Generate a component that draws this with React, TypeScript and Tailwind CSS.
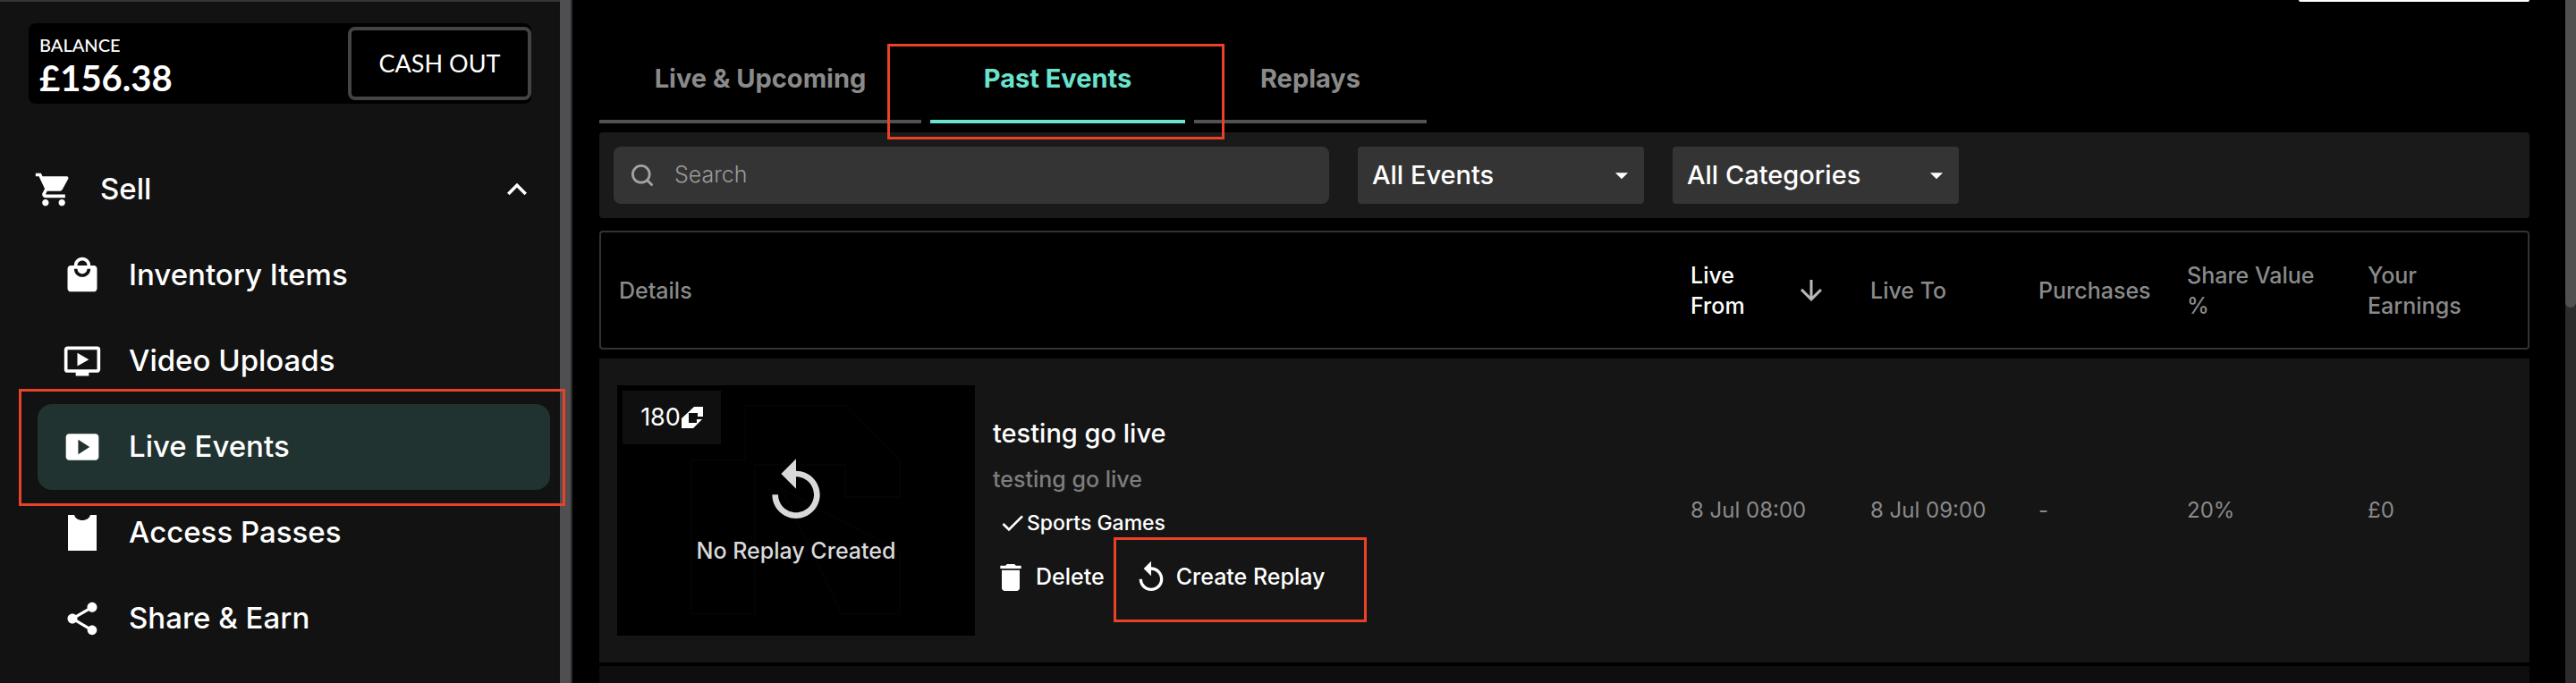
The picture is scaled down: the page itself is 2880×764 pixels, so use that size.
import React, { useState } from 'react';
import {
  MdArrowDownward,
  MdArrowDropDown,
  MdCheck,
  MdDelete,
  MdExpandLess,
  MdLocalMall,
  MdOndemandVideo,
  MdReplay,
  MdShare,
  MdShoppingCart,
  MdSmartDisplay,
} from 'react-icons/md';

const PassIcon = () => (
  <svg viewBox="0 0 44 44" className="size-11" fill="currentColor" aria-hidden="true">
    <path d="M6 2h7c1 3.8 4.500 6 9 6s8-2.200 9-6h7v40H6z" />
  </svg>
);

const SearchIcon = () => (
  <svg viewBox="0 0 24 24" className="size-6" fill="none" stroke="#a3a3a3" strokeWidth="2.8" aria-hidden="true">
    <circle cx="10.800" cy="10.800" r="9.400" />
    <path d="M17.500 17.500l6 6" />
  </svg>
);

const TokenIcon = () => (
  <svg viewBox="0 0 24 24" className="size-6" fill="currentColor" aria-hidden="true">
    <path d="M14 0h10v11h-6V7H8v11h9v-4h6L13 24H0V13z" />
  </svg>
);

const Watermark = () => (
  <svg viewBox="0 0 400 280" className="absolute inset-0 size-full" fill="none" stroke="#040404" strokeWidth="2" aria-hidden="true">
    <path d="M83 84h60V23h114l59 61v41h-61V89H154v167H83z" />
    <path d="M184 116l132 70v70h-65z" />
  </svg>
);

// red frame drawn over a highlighted control
const Frame = ({ className }: { className: string }) => (
  <span className={`absolute z-10 border-3 border-[#ea4226] pointer-events-none ${className}`} />
);

const navItems = [
  { label: 'Inventory Items', icon: <MdLocalMall className="size-11" /> },
  { label: 'Video Uploads', icon: <MdOndemandVideo className="size-11" /> },
  { label: 'Live Events', icon: <MdSmartDisplay className="size-11" /> },
  { label: 'Access Passes', icon: <PassIcon /> },
  { label: 'Share & Earn', icon: <MdShare className="size-11" /> },
];

const Sidebar: React.FC = () => (
  <aside className="flex w-[640px] shrink-0">
    <div className="flex-1 bg-[#121212] border-t-2 border-[#363630] text-white">
      <div className="mt-6 ml-8 mr-8 flex items-center justify-between rounded-lg bg-black">
        <div className="pl-3 pt-3 pb-1">
          <p className="font-['Lato'] text-xl leading-6 font-medium">BALANCE</p>
          <p className="font-['Lato'] text-[40px] leading-[50px] font-bold">£156.38</p>
        </div>
        <button className="h-[82px] w-[205px] rounded-lg border-4 border-[#444] font-['Lato'] text-[27px]">
          CASH OUT
        </button>
      </div>
      <nav className="mt-12">
        <button className="flex h-24 w-full items-center pl-[38px] pr-[26px] text-[33px] font-medium">
          <MdShoppingCart className="size-11" />
          <span className="ml-[30px] flex-1 text-left">Sell</span>
          <MdExpandLess className="size-11" />
        </button>
        {navItems.map(item => {
          const active = item.label === 'Live Events';
          return (
            <a
              key={item.label}
              href="#"
              className={`relative ml-[42px] mr-[11px] flex h-24 items-center gap-[30px] rounded-2xl pl-7 text-[33px] font-medium ${active ? 'bg-[#203330]' : ''}`}
            >
              {item.icon}
              {item.label}
              {active && <Frame className="-left-[21px] -right-[17px] -top-[17px] -bottom-[18px]" />}
            </a>
          );
        })}
      </nav>
    </div>
    <div className="w-[14px] border-r-2 border-[#2e2e2e] bg-[#4f4f51]" />
  </aside>
);

const tabs = [
  { label: 'Live & Upcoming', width: 'w-[360px]' },
  { label: 'Past Events', width: 'w-[285px]' },
  { label: 'Replays', width: 'w-[260px]' },
];

const Select = ({ label, options }: { label: string; options: string[] }) => (
  <div className="relative w-80">
    <select
      aria-label={label}
      className="h-16 w-full appearance-none rounded bg-[#343434] pl-4 pr-12 text-[29px] font-medium text-white"
    >
      {options.map(option => (
        <option key={option}>{option}</option>
      ))}
    </select>
    <MdArrowDropDown className="absolute right-2 top-[15px] size-[34px] text-white pointer-events-none" />
  </div>
);

const EventsTable: React.FC = () => (
  <table className="mt-[10px] w-full table-fixed border-separate border-spacing-x-0 border-spacing-y-1 text-2xl text-[#8a8a8a]">
    <colgroup>
      <col />
      <col className="w-[201px]" />
      <col className="w-[188px]" />
      <col className="w-[166px]" />
      <col className="w-[202px]" />
      <col className="w-[201px]" />
    </colgroup>
    <thead>
      <tr className="h-[133px] text-left text-[25px] leading-[34px] *:border-y-2 *:border-[#333] *:font-medium *:pl-5">
        <th className="rounded-l border-l-2">Details</th>
        <th className="pr-7">
          <button className="flex w-full items-center justify-between text-left text-white">
            <span className="w-20">Live From</span>
            <MdArrowDownward className="size-9 text-[#b8b8b8]" />
          </button>
        </th>
        <th>Live To</th>
        <th>Purchases</th>
        <th className="pr-8">Share Value %</th>
        <th className="rounded-r border-r-2 pr-9">Your Earnings</th>
      </tr>
    </thead>
    <tbody>
      <tr className="h-0.5" aria-hidden="true" />
      <tr className="bg-[#151515] *:pl-5 *:whitespace-nowrap">
        <td className="py-[30px]">
          <div className="flex items-start gap-5 text-[25px]">
            <div className="relative flex h-[280px] w-[400px] flex-col items-center bg-black pt-[79px] text-[#d9d9d9]">
              <Watermark />
              <span className="absolute left-1.5 top-1.5 flex h-[60px] w-[110px] items-center justify-center gap-px bg-[#0f0f0f] text-[27px] text-white">
                180
                <TokenIcon />
              </span>
              <MdReplay className="relative size-20" />
              <p className="relative mt-2 leading-9 font-medium">No Replay Created</p>
            </div>
            <div className="pt-[33px] text-white">
              <h2 className="text-[29px] leading-[42px] font-medium">testing go live</h2>
              <p className="mt-3 leading-9 font-medium text-[#7d7d7d]">testing go live</p>
              <p className="mt-3.5 flex items-center pl-1.5 text-[23px] leading-[34px] font-medium">
                <MdCheck className="size-8" />
                Sports Games
              </p>
              <div className="mt-6 flex gap-8 font-medium">
                <button className="flex h-10 items-center gap-2">
                  <MdDelete className="size-10" />
                  Delete
                </button>
                <button className="relative flex h-10 items-center gap-2">
                  <MdReplay className="size-10" />
                  Create Replay
                  <Frame className="-left-[22px] w-[283px] -top-[25px] -bottom-[30px]" />
                </button>
              </div>
            </div>
          </div>
        </td>
        <td>8 Jul 08:00</td>
        <td>8 Jul 09:00</td>
        <td>-</td>
        <td>20%</td>
        <td>£0</td>
      </tr>
      <tr className="h-[340px] bg-[#0e0e0e]">
        <td colSpan={6} />
      </tr>
    </tbody>
  </table>
);

export default function App() {
  const [activeTab, setActiveTab] = useState('Past Events');

  return (
    <div className="flex h-screen overflow-hidden bg-black font-['Inter',sans-serif]">
      <Sidebar />
      <main className="min-w-0 flex-1 pl-[30px] pr-10">
        <div className="ml-auto h-0.5 w-[258px] rounded-b bg-white" />
        <div className="mt-[49px] flex gap-[10px]">
          {tabs.map(tab => {
            const active = tab.label === activeTab;
            return (
              <button
                key={tab.label}
                onClick={() => setActiveTab(tab.label)}
                className={`relative border-b-4 pt-4 pb-[25px] text-[29px] leading-[42px] font-bold ${tab.width} ${active ? 'border-[#69e3cd] text-[#69e3cd]' : 'border-[#525252] text-[#8a8a8a]'}`}
              >
                {tab.label}
                {tab.label === 'Past Events' && <Frame className="-left-12 -right-11 -top-0.5 -bottom-[22px]" />}
              </button>
            );
          })}
        </div>
        <div className="mt-[10px] flex gap-8 rounded bg-[#1a1a1a] p-4">
          <label className="flex h-16 w-[800px] items-center gap-6 rounded-lg bg-[#343434] pl-5">
            <SearchIcon />
            <input
              type="text"
              aria-label="Search"
              placeholder="Search"
              className="flex-1 bg-transparent text-[25px] font-light text-white outline-none placeholder:text-[#9a9a9a]"
            />
          </label>
          <Select label="Events" options={['All Events', 'Live', 'Ended']} />
          <Select label="Categories" options={['All Categories', 'Sports Games']} />
        </div>
        <EventsTable />
      </main>
      <div className="w-3 bg-[#2c2c2c]">
        <div className="h-[45vh] rounded-b-full bg-[#505050]" />
      </div>
    </div>
  );
}
